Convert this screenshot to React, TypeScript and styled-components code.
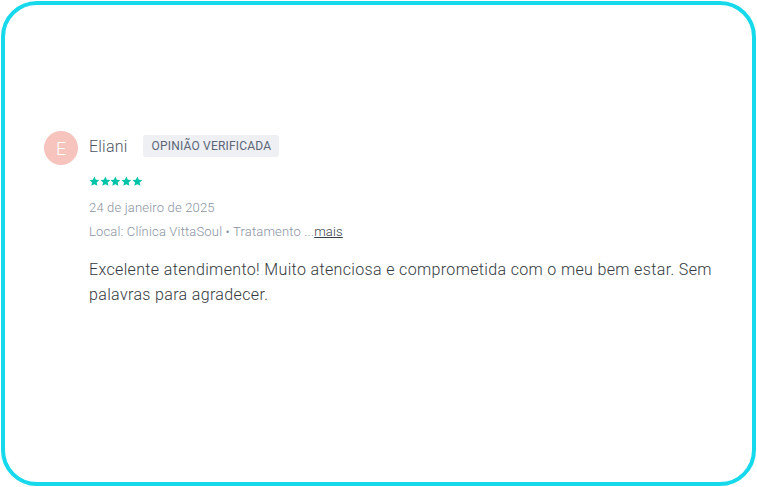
import React from "react";
import styled, { createGlobalStyle } from "styled-components";

const GlobalStyle = createGlobalStyle`
  html, body {
    margin: 0;
    padding: 0;
    background: #fff;
  }
  body {
    font-family: Roboto, "Liberation Sans", Arial, sans-serif;
    font-weight: 300;
  }
`;

const Frame = styled.div`
  box-sizing: border-box;
  margin: 1px;
  width: 755px;
  height: 485px;
  border: 4px solid #16d9ec;
  border-radius: 36px;
  background: #fff;
  padding: 126px 30px 0 39px;
`;

const Review = styled.div`
  display: flex;
  align-items: flex-start;
  gap: 11px;
`;

const Avatar = styled.div`
  flex: none;
  width: 34px;
  height: 34px;
  border-radius: 50%;
  background: #f6c3bd;
  color: #fff;
  font-size: 18px;
  display: flex;
  align-items: center;
  justify-content: center;
`;

const Body = styled.div`
  display: flex;
  flex-direction: column;
  max-width: 645px;
`;

const Header = styled.div`
  height: 34px;
  display: flex;
  align-items: center;
  gap: 16px;
`;

const Name = styled.span`
  font-size: 16px;
  color: #4d5561;
  margin-top: -4px;
  letter-spacing: 0.2px;
`;

const Badge = styled.span`
  height: 22px;
  display: inline-flex;
  align-items: center;
  padding: 0 8px;
  border-radius: 3px;
  background: #eef0f4;
  color: #5b6576;
  font-size: 12px;
  font-weight: 400;
  text-transform: uppercase;
  margin-top: -4px;
  letter-spacing: 0.2px;
`;

const Stars = styled.div`
  display: flex;
  margin-top: 11px;
  height: 11px;
`;

const Meta = styled.div<{ $gap: number }>`
  font-size: 13px;
  line-height: 18px;
  color: #8a94a3;
  margin-top: ${(p) => p.$gap}px;
  letter-spacing: 0.17px;

  a {
    color: #3a3f47;
    text-decoration: underline;
  }
`;

const Text = styled.p`
  margin: 16px 0 0;
  font-size: 16px;
  line-height: 25px;
  color: #343940;
  letter-spacing: 0.35px;
`;

const Star = () => (
  <svg width="10.7" height="11" viewBox="0 0 24 24">
    <path
      fill="#00c4a7"
      d="M12 1l3.3 7.1 7.7.8-5.8 5.2 1.7 7.7L12 17.9 5.1 21.8l1.7-7.7L1 8.9l7.7-.8z"
    />
  </svg>
);

export default function App() {
  return (
    <>
      <GlobalStyle />
      <Frame>
        <Review>
          <Avatar>E</Avatar>
          <Body>
            <Header>
              <Name>Eliani</Name>
              <Badge>Opinião verificada</Badge>
            </Header>
            <Stars>
              {[0, 1, 2, 3, 4].map((i) => (
                <Star key={i} />
              ))}
            </Stars>
            <Meta $gap={12}>24 de janeiro de 2025</Meta>
            <Meta $gap={6}>
              Local: Clínica VittaSoul • Tratamento ...<a href="#">mais</a>
            </Meta>
            <Text>
              Excelente atendimento! Muito atenciosa e comprometida com o meu bem estar. Sem
              palavras para agradecer.
            </Text>
          </Body>
        </Review>
      </Frame>
    </>
  );
}
